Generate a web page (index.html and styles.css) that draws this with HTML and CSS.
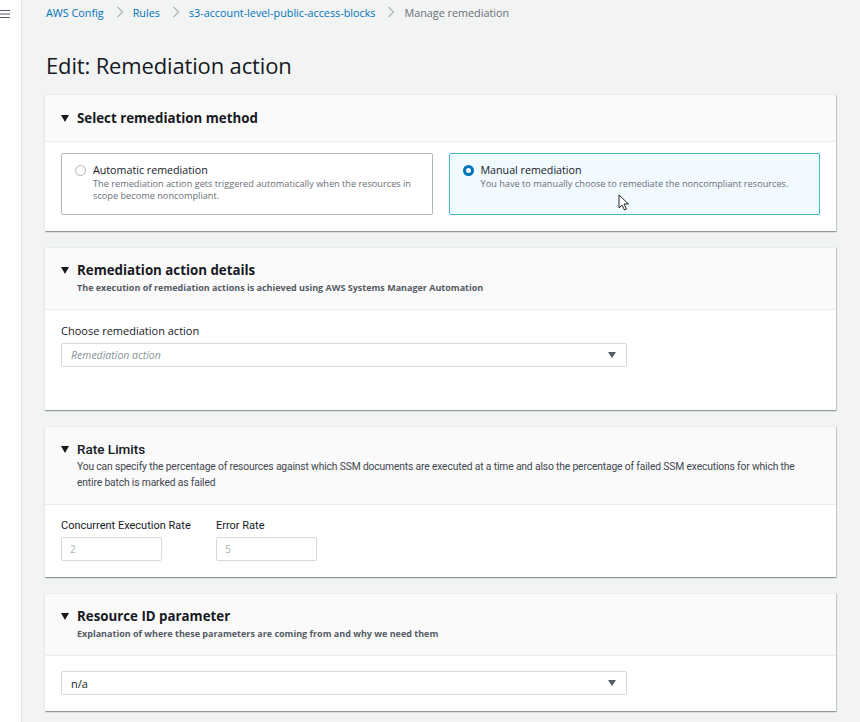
FILE: index.html
```html
<!DOCTYPE html>
<html>
<head>
<meta charset="utf-8">
<link rel="stylesheet" href="styles.css">
</head>
<body>
<div class="app">
  <aside class="side">
    <svg class="burger" width="10" height="8" viewBox="0 0 10 8"><path d="M0 0.5H10M0 4H10M0 7.5H10" stroke="#545b64" stroke-width="1"/></svg>
  </aside>
  <main class="main">
    <nav class="crumbs">
      <a>AWS Config</a><span class="sep"><svg width="8" height="12" viewBox="0 0 8 12"><path d="M1.5 1L6.5 6L1.5 11" fill="none" stroke="#aab7b8" stroke-width="1.2"/></svg></span>
      <a>Rules</a><span class="sep"><svg width="8" height="12" viewBox="0 0 8 12"><path d="M1.5 1L6.5 6L1.5 11" fill="none" stroke="#aab7b8" stroke-width="1.2"/></svg></span>
      <a>s3-account-level-public-access-blocks</a><span class="sep"><svg width="8" height="12" viewBox="0 0 8 12"><path d="M1.5 1L6.5 6L1.5 11" fill="none" stroke="#aab7b8" stroke-width="1.2"/></svg></span>
      <span class="cur">Manage remediation</span>
    </nav>
    <h1 class="title">Edit: Remediation action</h1>

    <section class="panel">
      <header class="phead p1">
        <h2><span class="tri"></span>Select remediation method</h2>
      </header>
      <div class="pbody cards">
        <label class="card">
          <span class="radio"></span>
          <span class="ctext"><span class="ctitle">Automatic remediation</span><span class="cdesc">The remediation action gets triggered automatically when the resources in scope become noncompliant.</span></span>
        </label>
        <label class="card on">
          <span class="radio on"></span>
          <span class="ctext"><span class="ctitle">Manual remediation</span><span class="cdesc">You have to manually choose to remediate the noncompliant resources.</span></span>
          <svg class="cursor" width="12" height="17" viewBox="0 0 12 17"><path d="M1 1V14L4 11L6.5 16L8.5 15L6 10H10.5Z" fill="#fff" stroke="#222" stroke-width="1"/></svg>
        </label>
      </div>
    </section>

    <section class="panel">
      <header class="phead">
        <h2><span class="tri"></span>Remediation action details</h2>
        <p class="sub">The execution of remediation actions is achieved using AWS Systems Manager Automation</p>
      </header>
      <div class="pbody b2">
        <div class="flabel">Choose remediation action</div>
        <div class="select"><span class="ph">Remediation action</span><span class="caret"></span></div>
      </div>
    </section>

    <section class="panel">
      <header class="phead narrow">
        <h2><span class="tri"></span>Rate Limits</h2>
        <p class="sub">You can specify the percentage of resources against which SSM documents are executed at a time and also the percentage of failed SSM executions for which the entire batch is marked as failed</p>
      </header>
      <div class="pbody b3">
        <div class="field first">
          <div class="flabel">Concurrent Execution Rate</div>
          <div class="input">2</div>
        </div>
        <div class="field">
          <div class="flabel">Error Rate</div>
          <div class="input">5</div>
        </div>
      </div>
    </section>

    <section class="panel">
      <header class="phead">
        <h2><span class="tri"></span>Resource ID parameter</h2>
        <p class="sub">Explanation of where these parameters are coming from and why we need them</p>
      </header>
      <div class="pbody b4">
        <div class="select"><span class="val">n/a</span><span class="caret"></span></div>
      </div>
    </section>
  </main>
</div>
</body>
</html>
```
FILE: styles.css
```css
* { box-sizing: border-box; }
html, body { margin: 0; padding: 0; }
body {
  font-family: "Open Sans", "Noto Sans", sans-serif;
  color: #16191f;
  background: #f2f3f3;
  width: 860px;
  height: 722px;
  overflow: hidden;
}
.app { display: flex; min-height: 722px; }
.side {
  width: 22px;
  flex: none;
  background: #fff;
  border-right: 1px solid #e1e4e4;
  padding: 10px 0 0 0;
}
.burger { display: block; }
.main {
  flex: 1;
  padding: 4px 24px 0 23px;
}
.crumbs {
  display: flex;
  align-items: center;
  height: 16px;
  font-size: 10.8px;
  padding-left: 1px;
}
.crumbs a { color: #0073bb; text-decoration: none; }
.crumbs .sep { display: flex; margin: 0 9px 0 12px; }
.crumbs .cur { color: #687078; }
.title {
  font-size: 22px;
  font-weight: 400;
  margin: 31px 0 0 1px;
  line-height: 28px;
  letter-spacing: -0.15px;
}
.panel {
  background: #fff;
  margin-top: 16px;
  box-shadow: 0 1px 1px 0 rgba(0,28,36,0.3), 1px 1px 1px 0 rgba(0,28,36,0.15);
  border-top: 1px solid #eaeded;
}
.title + .panel { margin-top: 15px; }
.phead {
  background: #fafafa;
  border-bottom: 1px solid #eaeded;
  padding: 13px 16px 13px 16px;
}
.phead.p1 { padding: 14px 16px 14px 16px; }
.phead h2 {
  margin: 0;
  font-size: 13.3px;
  font-weight: 700;
  line-height: 18px;
  display: flex;
  align-items: center;
}
.tri {
  width: 0; height: 0;
  border-left: 4px solid transparent;
  border-right: 4px solid transparent;
  border-top: 7px solid #16191f;
  margin: 0 8px 0 0;
}
.sub {
  margin: 1px 0 0 16px;
  font-size: 9px;
  font-weight: 700;
  color: #545b64;
  line-height: 16px;
}
.phead.narrow h2 { font-family: Roboto, "Open Sans", sans-serif; font-weight: 500; font-size: 13.5px; }
.phead.narrow .sub {
  font-family: Roboto, "Open Sans", sans-serif;
  font-weight: 400;
  font-size: 10.3px;
  letter-spacing: -0.15px;
  color: #414750;
  margin-right: 20px;
}
.pbody { padding: 0 16px; }
.cards {
  display: flex;
  gap: 16px;
  padding: 11px 16px 16px 16px;
}
.card {
  flex: 1;
  display: flex;
  align-items: flex-start;
  border: 1px solid #aab7b8;
  border-radius: 2px;
  height: 62px;
  padding: 9px 12px 0 13px;
  position: relative;
}
.card.on {
  background: #f1faff;
  border-color: #44b9d6;
}
.radio {
  width: 11px; height: 11px;
  border-radius: 50%;
  border: 1px solid #aab7b8;
  margin: 2px 7px 0 0;
  flex: none;
  background: #fff;
}
.radio.on { border: 3px solid #0073bb; }
.ctext { display: flex; flex-direction: column; }
.ctitle { font-size: 10.7px; line-height: 15px; color: #16191f; }
.cdesc { font-size: 9.2px; line-height: 12px; color: #687078; }
.cursor { position: absolute; left: 168px; top: 40px; }
.b2 { padding: 13px 16px 43px 16px; }
.flabel { font-size: 11px; line-height: 15px; color: #16191f; margin-bottom: 5px; }
.select {
  width: 566px;
  height: 24px;
  border: 1px solid #d5dbdb;
  border-radius: 2px;
  display: flex;
  align-items: center;
  justify-content: space-between;
  padding: 0 10px 0 9px;
  font-size: 10.5px;
}
.ph { color: #879596; font-style: italic; }
.val { color: #16191f; font-size: 11px; }
.caret {
  width: 0; height: 0;
  border-left: 4.5px solid transparent;
  border-right: 4.5px solid transparent;
  border-top: 6px solid #545b64;
}
.b3 {
  display: flex;
  gap: 22px;
  padding: 13px 16px 16px 16px;
}
.b3 .field.first { width: 133px; }
.b3 .flabel { margin-bottom: 4px; font-family: Roboto, "Open Sans", sans-serif; font-size: 11px; white-space: nowrap; }
.input {
  width: 101px;
  height: 24px;
  border: 1px solid #d5dbdb;
  border-radius: 2px;
  font-size: 10.5px;
  color: #aab7b8;
  padding: 4px 8px;
}
.b4 { padding: 15px 16px 16px 16px; }
```
